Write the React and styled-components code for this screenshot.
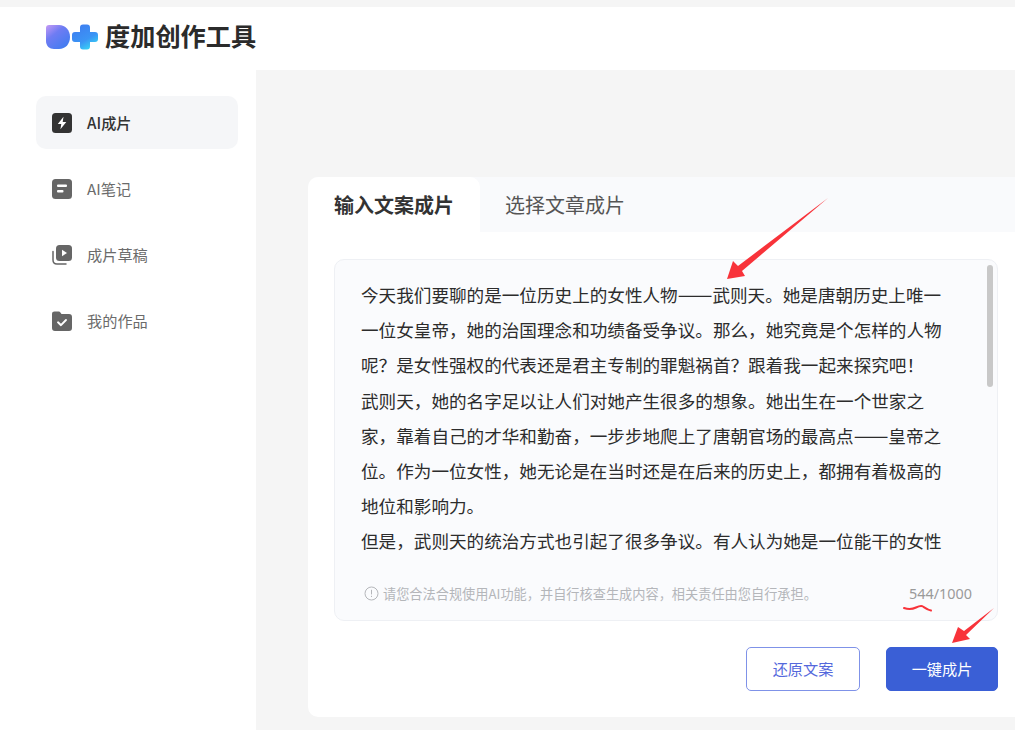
import React from 'react';
import styled, { createGlobalStyle } from 'styled-components';

const GlobalStyle = createGlobalStyle`
  html, body {
    margin: 0;
    padding: 0;
    background: #fff;
    font-family: "Noto Sans CJK SC", "Liberation Sans", sans-serif;
  }
`
const Page = styled.div`
  position: relative;
  width: 1015px;
  height: 730px;
  overflow: hidden;
  display: flex;
  flex-direction: column;
  background: #fff;
`
const TopStrip = styled.div`
  height: 7px;
  flex-shrink: 0;
  background: #f5f5f5;
`
const Header = styled.header`
  height: 63px;
  flex-shrink: 0;
  display: flex;
  align-items: center;
  padding: 0 0 4px 46px;
  box-sizing: border-box;
  gap: 7px;
`
const LogoText = styled.span`
  margin-bottom: 4px;
  font-size: 25.2px;
  font-weight: 700;
  line-height: 30px;
  color: #2b2b2b;
`
const Body = styled.div`
  flex: 1;
  display: flex;
  min-height: 0;
`
const Sidebar = styled.nav`
  width: 256px;
  flex-shrink: 0;
  box-sizing: border-box;
  padding: 26px 18px 0 36px;
  display: flex;
  flex-direction: column;
  gap: 13px;
`
const NavItem = styled.div`
  height: 53px;
  display: flex;
  align-items: center;
  gap: 15px;
  padding-left: 16px;
  border-radius: 10px;
  font-size: 15.2px;
  background: ${p => (p.$active ? '#f5f6f8' : 'transparent')};
  color: ${p => (p.$active ? '#333' : '#6b6b6b')};
  font-weight: ${p => (p.$active ? 500 : 400)};
`
const NavLabel = styled.span`
  margin-bottom: 2px;
`
const Main = styled.main`
  flex: 1;
  min-width: 0;
  background: #f5f5f5;
  padding: 107px 0 0 52px;
`
const Card = styled.section`
  width: 716px;
  height: 540px;
  background: #fff;
  border-radius: 10px;
  overflow: hidden;
`
const Tabs = styled.div`
  height: 55px;
  display: flex;
  background: #f9fafc;
`
const Tab = styled.div`
  width: ${p => (p.$active ? '172px' : 'auto')};
  box-sizing: border-box;
  padding: 0 0 0 ${p => (p.$active ? '26px' : '25px')};
  display: flex;
  align-items: center;
  font-size: 20px;
  font-weight: ${p => (p.$active ? 700 : 400)};
  color: ${p => (p.$active ? '#333' : '#555')};
  background: ${p => (p.$active ? '#fff' : 'transparent')};
  border-radius: ${p => (p.$active ? '10px 10px 0 0' : '0')};
`
const Content = styled.div`
  padding: 27px 26px 0;
`
const EditorBox = styled.div`
  position: relative;
  height: 362px;
  box-sizing: border-box;
  padding: 17px 0 0 26px;
  background: #fafbfd;
  border: 1px solid #eef0f4;
  border-radius: 10px;
`
const ArticleText = styled.div`
  width: 600px;
  height: 298px;
  overflow: hidden;
  font-size: 17.6px;
  line-height: 35.2px;
  color: #2c2c2c;
`
const TextLine = styled.div`
  white-space: nowrap;
`
const Dash = styled.span`
  font-size: 20.7px;
  line-height: 1;
`
const Scrollbar = styled.div`
  position: absolute;
  top: 5px;
  right: 4px;
  width: 6px;
  height: 122px;
  border-radius: 3px;
  background: #c8c8c8;
`
const BoxFooter = styled.div`
  display: flex;
  align-items: center;
  justify-content: space-between;
  padding: 0 25px 0 3px;
  height: 36px;
`
const Hint = styled.div`
  display: flex;
  align-items: center;
  gap: 4px;
  font-size: 13.2px;
  color: #b4b6ba;
`
const Counter = styled.span`
  font-size: 14.4px;
  color: #9a9a9a;
  font-family: "Noto Sans", "Noto Sans CJK SC", sans-serif;
`
const Actions = styled.div`
  display: flex;
  justify-content: flex-end;
  gap: 26px;
  margin-top: 26px;
`
const Button = styled.button`
  width: ${p => (p.$primary ? '112px' : '114px')};
  height: 44px;
  padding: 0 0 2px;
  border-radius: 5px;
  box-sizing: border-box;
  font-family: inherit;
  font-size: 15.2px;
  border: 1px solid ${p => (p.$primary ? '#3a5fd6' : '#7f92e8')};
  background: ${p => (p.$primary ? '#3a5fd6' : '#fff')};
  color: ${p => (p.$primary ? '#fff' : '#5468dc')};
`
const Annotations = styled.svg`
  position: absolute;
  inset: 0;
  pointer-events: none;
`

function Logo() {
  return (
    <svg width="52" height="26" viewBox="0 0 52 26">
      <defs>
        <linearGradient id="logoA" x1="0" y1="0" x2="0.8" y2="1">
          <stop offset="0" stopColor="#c79bf5" />
          <stop offset="0.4" stopColor="#6f7cf3" />
          <stop offset="1" stopColor="#3f7cf0" />
        </linearGradient>
        <linearGradient id="logoB" x1="0.2" y1="0" x2="0.8" y2="1">
          <stop offset="0" stopColor="#3f7df0" />
          <stop offset="0.6" stopColor="#3b95f5" />
          <stop offset="1" stopColor="#36e0f5" />
        </linearGradient>
      </defs>
      <path d="M3 1h10c6.500 0 11 5 11 12s-4.500 12-11 12H8c-4.500 0-8-3-8-8V4c0-2 1-3 3-3z" fill="url(#logoA)" />
      <path d="M34 3.500c0-2 1-3 3-3h4c2 0 3 1 3 3V8h5c2 0 3 1 3 3v4c0 2-1 3-3 3h-5v4.500c0 2-1 3-3 3h-4c-2 0-3-1-3-3V18h-5c-2 0-3-1-3-3v-4c0-2 1-3 3-3h5z" fill="url(#logoB)" />
    </svg>
  )
}

function BoltIcon() {
  return (
    <svg width="20" height="20" viewBox="0 0 20 20">
      <rect x="0" y="0" width="20" height="20" rx="3.500" fill="#333" />
      <path d="M11.500 3.800 5.800 11h3.500L8.400 16.200 14.300 9h-3.600z" fill="#fff" />
    </svg>
  )
}
function NoteIcon() {
  return (
    <svg width="20" height="20" viewBox="0 0 20 20">
      <rect x="0" y="0" width="20" height="20" rx="3.500" fill="#666" />
      <rect x="5" y="5.500" width="10" height="2.400" rx="1" fill="#fff" />
      <rect x="5" y="11" width="6.500" height="2.400" rx="1" fill="#fff" />
    </svg>
  )
}
function DraftIcon() {
  return (
    <svg width="20" height="20" viewBox="0 0 20 20">
      <path d="M1 6.500v8.500c0 2.400 1.600 4 4 4h9" fill="none" stroke="#666" strokeWidth="1.500" strokeLinecap="round" />
      <rect x="4" y="0" width="16" height="16" rx="3.500" fill="#666" />
      <path d="M10 4.800v6.400l5-3.200z" fill="#fff" />
    </svg>
  )
}
function WorksIcon() {
  return (
    <svg width="20" height="20" viewBox="0 0 20 20">
      <path d="M0 3c0-1.700 1-2.500 2.500-2.500h4.200c.8 0 1.300.4 1.700 1L9.500 3h7.500C19 3 20 4 20 6v11c0 2-1 3-3 3H3c-2 0-3-1-3-3z" fill="#666" />
      <path d="M6 11.300l3 2.900 5-5.200" fill="none" stroke="#fff" strokeWidth="1.900" strokeLinecap="round" strokeLinejoin="round" />
    </svg>
  )
}
function InfoIcon() {
  return (
    <svg width="15" height="15" viewBox="0 0 15 15">
      <circle cx="7.500" cy="7.500" r="6.500" fill="none" stroke="#b4b6ba" strokeWidth="1" />
      <rect x="7" y="3.800" width="1" height="4.600" fill="#b4b6ba" />
      <rect x="7" y="9.800" width="1" height="1.200" fill="#b4b6ba" />
    </svg>
  )
}

const navItems = [
  { label: 'AI成片', icon: <BoltIcon />, active: true },
  { label: 'AI笔记', icon: <NoteIcon /> },
  { label: '成片草稿', icon: <DraftIcon /> },
  { label: '我的作品', icon: <WorksIcon /> },
]

export default function App() {
  return (
    <Page>
      <GlobalStyle />
      <TopStrip />
      <Header>
        <Logo />
        <LogoText>度加创作工具</LogoText>
      </Header>
      <Body>
        <Sidebar>
          {navItems.map(item => (
            <NavItem key={item.label} $active={item.active}>
              {item.icon}
              <NavLabel>{item.label}</NavLabel>
            </NavItem>
          ))}
        </Sidebar>
        <Main>
          <Card>
            <Tabs>
              <Tab $active>输入文案成片</Tab>
              <Tab>选择文章成片</Tab>
            </Tabs>
            <Content>
              <EditorBox>
                <ArticleText>
                  <TextLine>今天我们要聊的是一位历史上的女性人物<Dash>——</Dash>武则天。她是唐朝历史上唯一</TextLine>
                  <TextLine>一位女皇帝，她的治国理念和功绩备受争议。那么，她究竟是个怎样的人物</TextLine>
                  <TextLine>呢？是女性强权的代表还是君主专制的罪魁祸首？跟着我一起来探究吧！</TextLine>
                  <TextLine>武则天，她的名字足以让人们对她产生很多的想象。她出生在一个世家之</TextLine>
                  <TextLine>家，靠着自己的才华和勤奋，一步步地爬上了唐朝官场的最高点<Dash>——</Dash>皇帝之</TextLine>
                  <TextLine>位。作为一位女性，她无论是在当时还是在后来的历史上，都拥有着极高的</TextLine>
                  <TextLine>地位和影响力。</TextLine>
                  <TextLine>但是，武则天的统治方式也引起了很多争议。有人认为她是一位能干的女性</TextLine>
                </ArticleText>
                <Scrollbar />
                <BoxFooter>
                  <Hint>
                    <InfoIcon />
                    请您合法合规使用AI功能，并自行核查生成内容，相关责任由您自行承担。
                  </Hint>
                  <Counter>544/1000</Counter>
                </BoxFooter>
              </EditorBox>
              <Actions>
                <Button>还原文案</Button>
                <Button $primary>一键成片</Button>
              </Actions>
            </Content>
          </Card>
        </Main>
      </Body>
      <Annotations width="1015" height="730" viewBox="0 0 1015 730">
        <path d="M828 198 738 266 733 261 727 279 745 276 742 271z" fill="#f8333a" />
        <path d="M994 608 964 631 958 627 952 643 970 639 966 635z" fill="#f8333a" />
        <path d="M904 608c4 1.500 8 1.500 12-.5 3-1.500 5-2.500 7-1 3 2 5 3.500 8 4" fill="none" stroke="#f8333a" strokeWidth="2" strokeLinecap="round" />
      </Annotations>
    </Page>
  )
}
